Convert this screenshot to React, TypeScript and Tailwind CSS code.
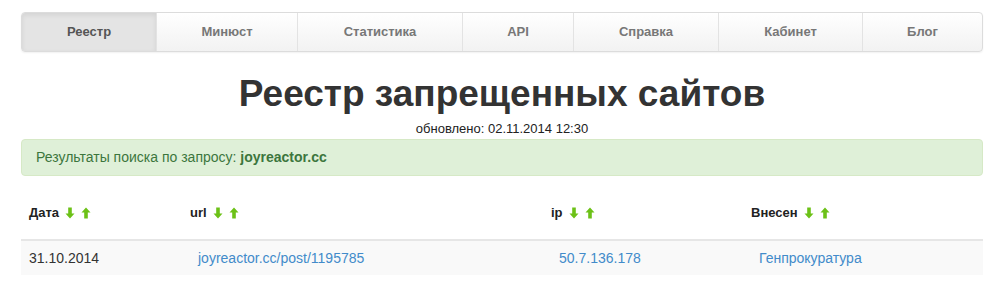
import React from "react";

const TABS = [
  { label: "Реестр", w: "w-[134px]", active: true },
  { label: "Минюст", w: "w-[141px]" },
  { label: "Статистика", w: "w-[165px]" },
  { label: "API", w: "w-[111px]" },
  { label: "Справка", w: "w-[145px]" },
  { label: "Кабинет", w: "w-[144px]" },
  { label: "Блог", w: "flex-1" },
];

function Arrow({ up }: { up?: boolean }) {
  return (
    <svg width="10" height="12" viewBox="0 0 10 12" className={up ? "" : "rotate-180"}>
      <path d="M5 0.5 L9.5 5.5 L6.8 5.5 L6.8 11.5 L3.2 11.5 L3.2 5.5 L0.5 5.5 Z" fill="#6cc117" />
    </svg>
  );
}

function SortTh({ label, w }: { label: string; w: string }) {
  return (
    <div className={`${w} px-2 flex items-center gap-[6px] font-bold text-[13px] leading-[14px] text-[#222]`}>
      <span>{label}</span>
      <span className="flex items-center gap-[6px]">
        <Arrow />
        <Arrow up />
      </span>
    </div>
  );
}

export default function App() {
  return (
    <div
      className="w-[1000px] h-[301px] bg-white text-[#333] overflow-hidden"
      style={{ fontFamily: '"Liberation Sans", Arial, sans-serif' }}
    >
      <div className="ml-[21px] w-[962px] pt-3">
        <nav className="flex h-[40px] rounded-[4px] border border-[#dcdcdc] bg-gradient-to-b from-white to-[#f2f2f2] shadow-[0_1px_2px_rgba(0,0,0,0.06)] overflow-hidden">
          {TABS.map((t, i) => (
            <div
              key={t.label}
              className={`${t.w} flex items-center justify-center text-[13px] font-bold ${
                i > 0 ? "border-l border-[#e3e3e3]" : ""
              } ${
                t.active
                  ? "bg-[#e4e4e4] text-[#555] shadow-[inset_0_2px_5px_rgba(0,0,0,0.08)]"
                  : "text-[#777]"
              }`}
            >
              {t.label}
            </div>
          ))}
        </nav>

        <h1 className="mt-[21px] text-center text-[37px] leading-[42px] font-bold text-[#333]">
          Реестр запрещенных сайтов
        </h1>
        <div className="mt-[6px] text-center text-[13px] leading-[16px] text-[#222]">
          обновлено: 02.11.2014 12:30
        </div>

        <div className="mt-[2px] h-[37px] flex items-center px-[14px] rounded-[4px] border border-[#d6e9c6] bg-[#dff0d8] text-[14px] text-[#3c763d]">
          Результаты поиска по запросу:&nbsp;<b>joyreactor.cc</b>
        </div>

        <div>
          <div className="flex pt-[30px] pb-[19px] items-center border-b-2 border-[#e6e6e6]">
            <SortTh label="Дата" w="w-[161px]" />
            <SortTh label="url" w="w-[361px]" />
            <SortTh label="ip" w="w-[200px]" />
            <SortTh label="Внесен" w="flex-1" />
          </div>
          <div className="flex h-[34px] items-center bg-[#f9f9f9] text-[14px]">
            <div className="w-[161px] px-2 text-[#333]">31.10.2014</div>
            <div className="w-[361px] pl-4 pr-2 text-[#428bca]">joyreactor.cc/post/1195785</div>
            <div className="w-[200px] pl-4 pr-2 text-[#428bca]">50.7.136.178</div>
            <div className="flex-1 pl-4 pr-2 text-[#428bca]">Генпрокуратура</div>
          </div>
        </div>
      </div>
    </div>
  );
}
